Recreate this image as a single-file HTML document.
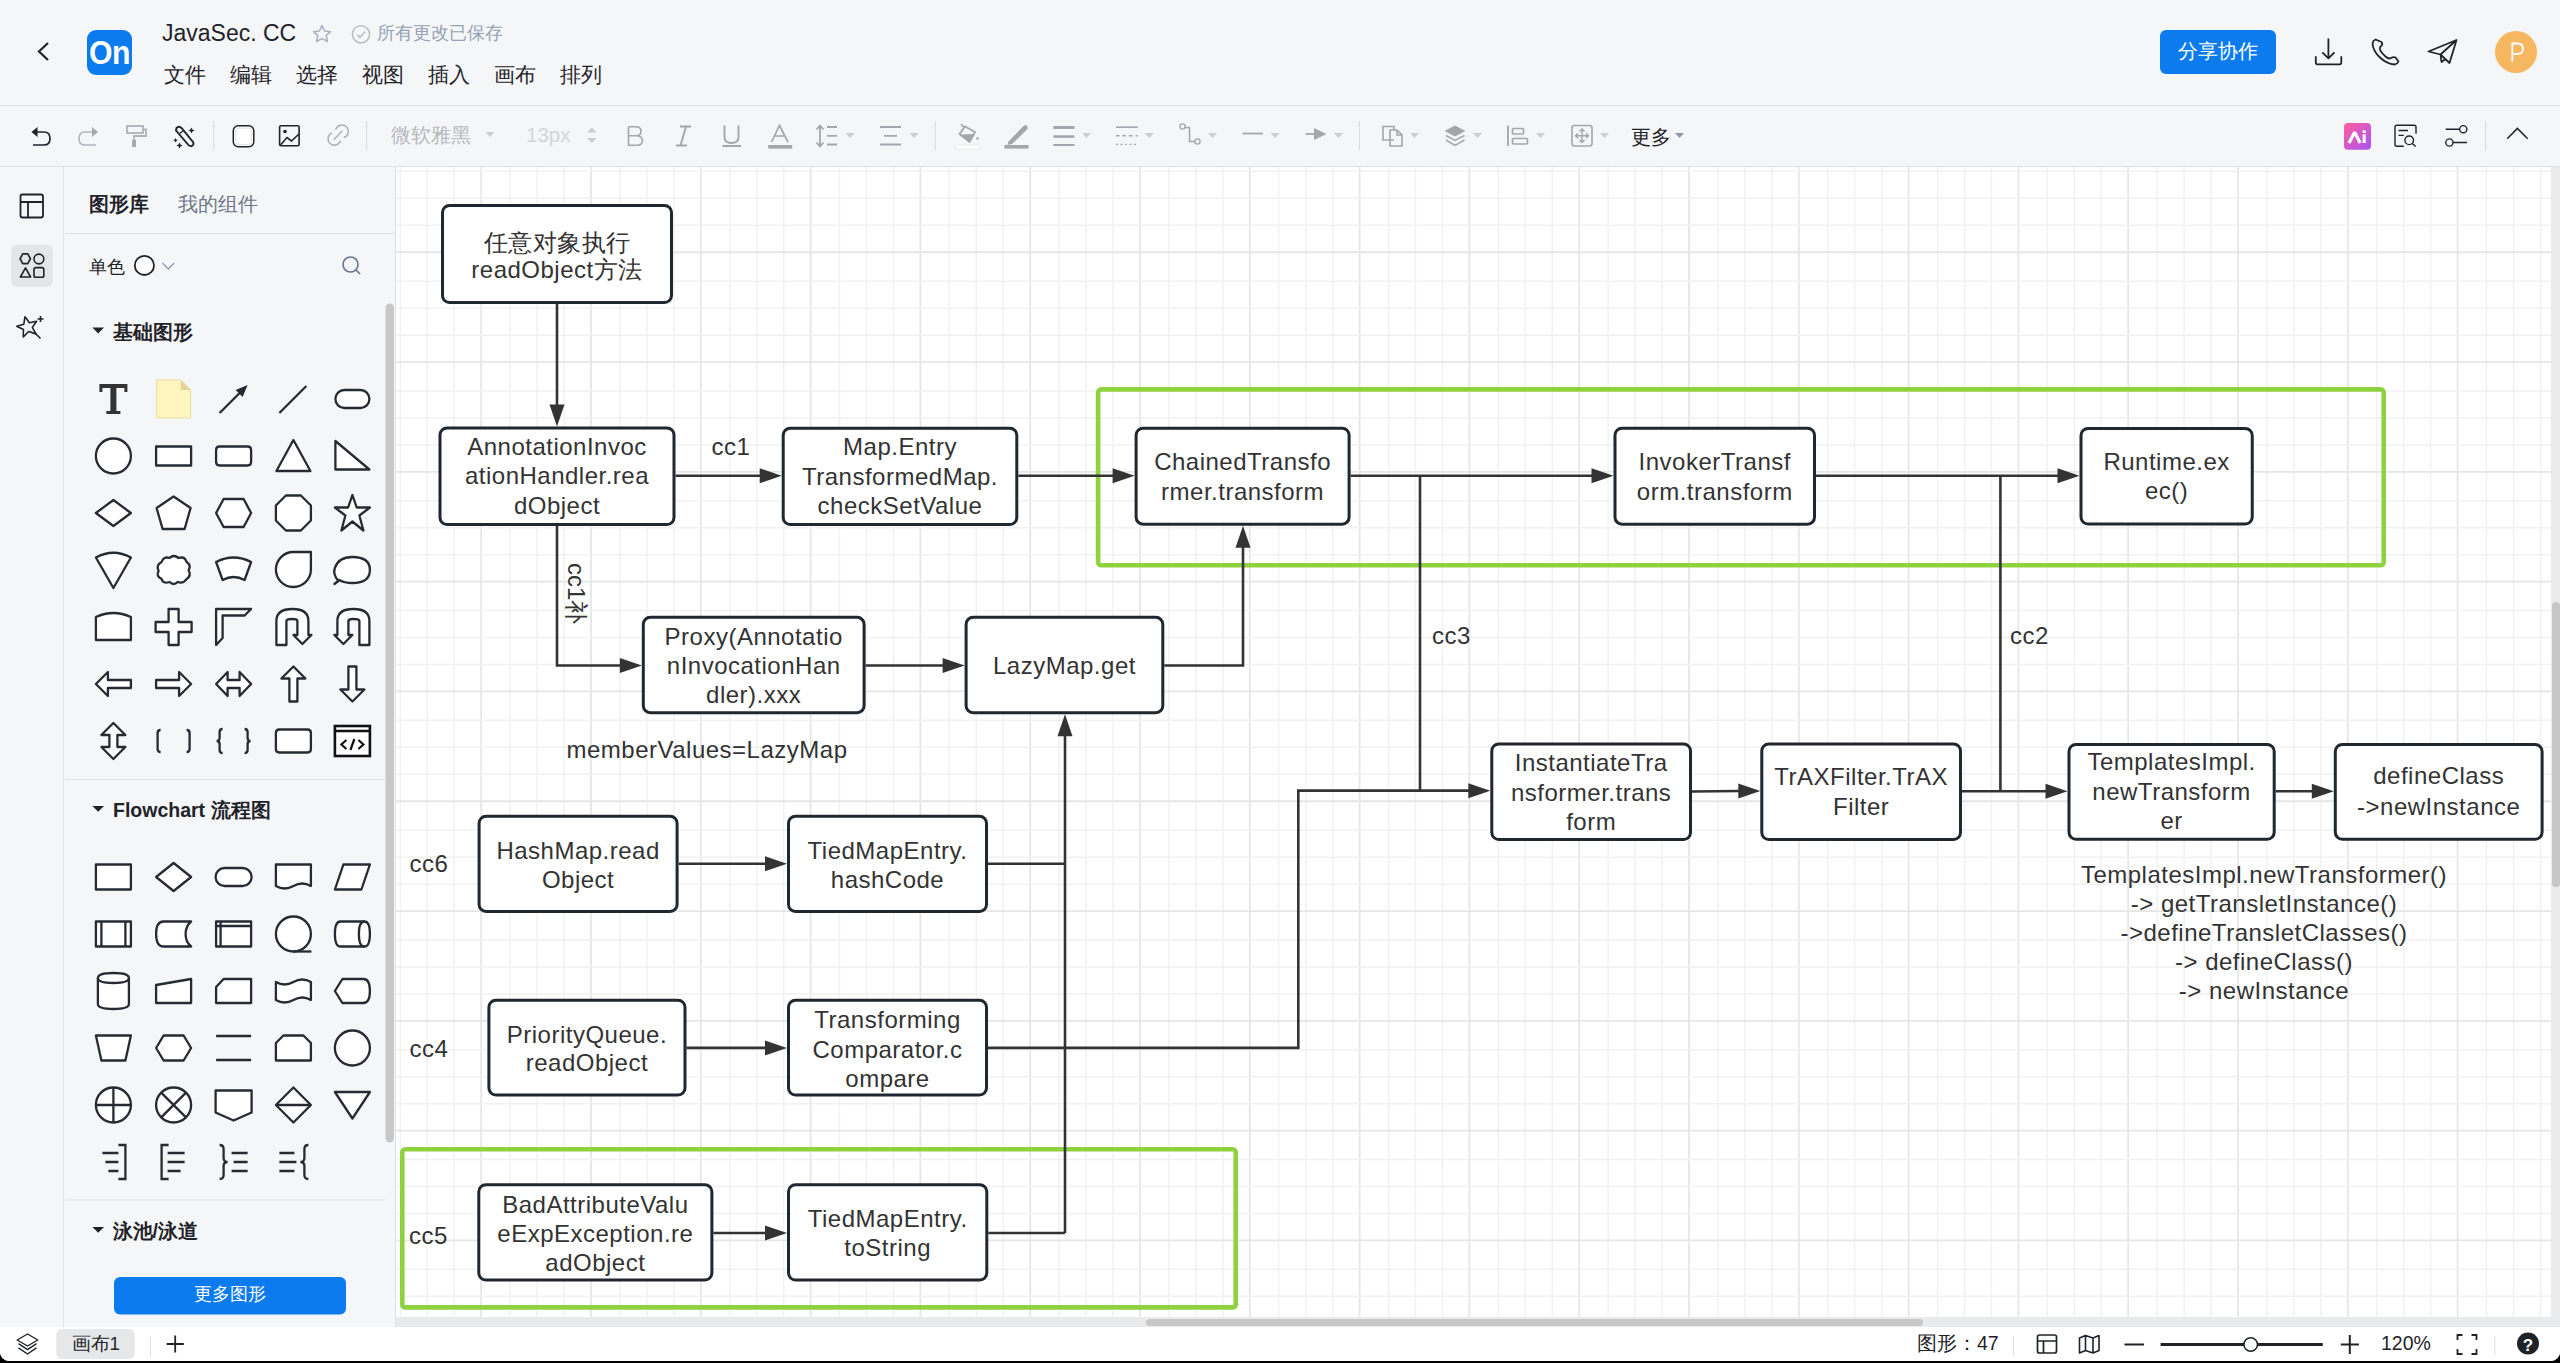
<!DOCTYPE html>
<html><head><meta charset="utf-8"><style>
html,body{margin:0;padding:0;width:2560px;height:1363px;overflow:hidden;background:#000}
.abs{position:absolute}
.t{font-family:"Liberation Sans",sans-serif;white-space:nowrap;line-height:1.2}
#app{position:absolute;left:0;top:0;width:2560px;height:1361px;background:#f5f6f8;border-radius:0 0 9px 9px;overflow:hidden}
.dt{font-family:"Liberation Sans",sans-serif;font-size:24px;fill:#333;text-anchor:middle;letter-spacing:0.5px}
.dl{font-family:"Liberation Sans",sans-serif;font-size:24px;fill:#333}
</style></head><body><div id="app">
<div class="abs" style="left:0;top:105px;width:2560px;height:1px;background:#dfe1e5"></div>
<div class="abs" style="left:0;top:166px;width:2560px;height:1px;background:#dfe1e5"></div>
<svg class="abs" style="left:0;top:0" width="700" height="105"><path d="M48,43 L39,51.5 L48,60" fill="none" stroke="#1f2329" stroke-width="2.2"/><rect x="87" y="30" width="45" height="45" rx="9" fill="#0b7bef"/><text transform="translate(109.5,64) scale(0.93,1)" text-anchor="middle" font-family="Liberation Sans" font-weight="bold" font-size="32.5" letter-spacing="-0.5" fill="#fff">On</text><path d="M322,25.5 L324.6,31 L330.5,31.7 L326.2,35.7 L327.4,41.5 L322,38.6 L316.6,41.5 L317.8,35.7 L313.5,31.7 L319.4,31 Z" fill="none" stroke="#aab3c3" stroke-width="1.6" stroke-linejoin="round"/><circle cx="361" cy="34.3" r="8.6" fill="none" stroke="#bcbcbc" stroke-width="1.5"/><path d="M357.2,34.6 L360,37.3 L365,31.8" fill="none" stroke="#bcbcbc" stroke-width="1.5"/></svg>
<div class="abs t" style="left:162px;top:20px;font-size:23px;color:#1f2329">JavaSec. CC</div>
<div class="abs t" style="left:377px;top:23px;font-size:18px;color:#95a1b5">所有更改已保存</div>
<div class="abs t" style="left:164px;top:63px;font-size:20.5px;color:#1f2329">文件</div>
<div class="abs t" style="left:230px;top:63px;font-size:20.5px;color:#1f2329">编辑</div>
<div class="abs t" style="left:296px;top:63px;font-size:20.5px;color:#1f2329">选择</div>
<div class="abs t" style="left:362px;top:63px;font-size:20.5px;color:#1f2329">视图</div>
<div class="abs t" style="left:428px;top:63px;font-size:20.5px;color:#1f2329">插入</div>
<div class="abs t" style="left:494px;top:63px;font-size:20.5px;color:#1f2329">画布</div>
<div class="abs t" style="left:560px;top:63px;font-size:20.5px;color:#1f2329">排列</div>
<div class="abs" style="left:2160px;top:30px;width:116px;height:44px;border-radius:6px;background:#0b7bef"></div>
<div class="abs t" style="left:2160px;top:39px;width:116px;text-align:center;font-size:20px;color:#fff">分享协作</div>
<svg class="abs" style="left:2300px;top:20px" width="260" height="70"><path d="M28.4,18.5 V38.5 M22.3,32.3 L28.4,38.4 L34.5,32.3 M15.8,36.3 V42.5 Q15.8,44.3 17.6,44.3 H39.5 Q41.3,44.3 41.3,42.5 V36.3" fill="none" stroke="#1f2329" stroke-width="1.8" stroke-linejoin="round"/><path d="M75.5,19.5 Q73,20.5 72.5,23.5 Q73,31 80,37.5 Q87,44 94.5,44.5 Q97.5,44 98.5,41.5 L95.5,37.5 Q93.5,36.5 91,38 Q89,39.5 85.5,36.5 Q81,32.5 80,29.5 Q79.5,27 81.5,25.5 Q83,24 81.5,22 Z" fill="none" stroke="#1f2329" stroke-width="1.8" stroke-linejoin="round"/><path d="M128.5,31.5 L156.5,20 L149.5,43 L140.5,34.5 Z M140.5,34.5 L156.5,20 M140.5,34.5 L141.5,42 L145.5,39" fill="none" stroke="#1f2329" stroke-width="1.8" stroke-linejoin="round"/><circle cx="216" cy="32" r="21" fill="#f5b860"/><path d="M212.3,41.7 V23.5 H217.5 Q223,23.5 223,28.7 Q223,33.8 217.5,33.8 H212.3" fill="none" stroke="#fff" stroke-width="1.8"/></svg>
<svg class="abs" style="left:0;top:0" width="2560" height="166"><path d="M35,132 H44 Q50,132 50,138.5 Q50,145 44,145 H33" fill="none" stroke="#1f2329" stroke-width="1.7"/><polygon points="31.5,132 37.5,127 37.5,137" fill="#1f2329"/>
<path d="M94,132 H85 Q79,132 79,138.5 Q79,145 85,145 H96" fill="none" stroke="#b4b7bc" stroke-width="1.7"/><polygon points="98,132 92,127 92,137" fill="#a6a9ae"/>
<rect x="127" y="126" width="16" height="7" fill="none" stroke="#b0b3b8" stroke-width="1.8"/><path d="M143,129.5 H146 V136 H134 V140" fill="none" stroke="#b0b3b8" stroke-width="1.8"/><rect x="132" y="140" width="4" height="7" fill="#a6a9ae"/>
<path d="M176.5,128 Q179,125.5 181.5,128 L193,142 Q194.5,145 191.5,146 Q189.5,146.5 188,144.5 L176,130.5 Z" fill="none" stroke="#1f2329" stroke-width="1.9"/><path d="M179.5,133.5 L183,131" stroke="#1f2329" stroke-width="1.5"/><path d="M191.5,127.5 l1,2 2,1 -2,1 -1,2 -1,-2 -2,-1 2,-1 z M175.5,138 l0.8,1.5 1.5,0.8 -1.5,0.8 -0.8,1.5 -0.8,-1.5 -1.5,-0.8 1.5,-0.8 z M179.5,142.5 l1,2 2,1 -2,1 -1,2 -1,-2 -2,-1 2,-1 z" fill="#1f2329"/>
<line x1="213.7" y1="121" x2="213.7" y2="150.5" stroke="#d8dadd" stroke-width="1"/>
<rect x="233.3" y="125.8" width="20.5" height="21" rx="5" fill="#fff" stroke="#1f2329" stroke-width="1.5"/><rect x="235.6" y="128.1" width="15.9" height="16.4" rx="3" fill="#fff" stroke="#dedfe2" stroke-width="1"/>
<rect x="279.6" y="125.8" width="19.5" height="20" rx="1.5" fill="none" stroke="#1f2329" stroke-width="1.6"/><circle cx="285" cy="131.5" r="1.8" fill="#1f2329"/><path d="M280.5,145 L287,137.5 L291.5,141 L299,134" fill="none" stroke="#1f2329" stroke-width="1.6"/>
<path d="M331.5,133.1 A6.4,6.4 0 1 0 340.4,141.2 M335.9,129.1 A6.4,6.4 0 1 1 344.4,137.3 M334.3,139.3 L341.8,131.3" fill="none" stroke="#acb0b6" stroke-width="1.5" stroke-linecap="round"/>
<line x1="366.7" y1="121" x2="366.7" y2="150.5" stroke="#d8dadd" stroke-width="1"/>
<polygon points="485.5,132 494.5,132 490.0,137" fill="#c9ced6"/>
<polygon points="587,132.5 596.5,132.5 591.75,127.5" fill="#c9ced6"/><polygon points="587,138 596.5,138 591.75,143" fill="#c9ced6"/>
<path d="M628.5,126.8 H636 Q641,126.8 641,131.5 Q641,135.8 636,135.8 H628.5 M636,135.8 Q642.5,135.8 642.5,140.5 Q642.5,145.3 636.5,145.3 H628.5 V126.8" fill="none" stroke="#a3a6ab" stroke-width="1.6"/>
<path d="M680,126.5 H691 M676,145.5 H687 M686,126.5 L680.5,145.5" fill="none" stroke="#a3a6ab" stroke-width="1.9"/>
<path d="M724.5,125.5 V137 Q724.5,143 731.5,143 Q738.5,143 738.5,137 V125.5 M722.5,146 H741" fill="none" stroke="#a3a6ab" stroke-width="1.9"/>
<path d="M771.5,142 L779.5,125.5 L788,142 M774.5,136 H785" fill="none" stroke="#a3a6ab" stroke-width="1.7"/><rect x="768.2" y="145" width="24" height="3.6" fill="#a3a6ab"/>
<path d="M820,126 V146 M816.5,129.5 L820,125.5 L823.5,129.5 M816.5,142.5 L820,146.5 L823.5,142.5 M827,127 H837 M827,135.8 H837 M827,144.5 H837" fill="none" stroke="#a3a6ab" stroke-width="1.8"/>
<polygon points="845.6,133 854.6,133 850.1,138" fill="#c9ced6"/>
<path d="M880,127 H901 M884,135.8 H897 M880,144.5 H901" fill="none" stroke="#a3a6ab" stroke-width="1.8"/>
<polygon points="909.6,133 918.6,133 914.1,138" fill="#c9ced6"/>
<line x1="935.3" y1="121" x2="935.3" y2="150.5" stroke="#d8dadd" stroke-width="1"/>
<path d="M961,124 L963.5,127 M959.5,134 L965,126.5 L975,132 L969.5,142 Z" fill="none" stroke="#a3a6ab" stroke-width="1.8"/><path d="M960,134.5 L975,134 L969.5,142 Z" fill="#a3a6ab"/><circle cx="977.5" cy="138.5" r="1.3" fill="#a3a6ab"/><rect x="955.5" y="145" width="25" height="4" fill="#fff" stroke="#e8e9eb" stroke-width="0.8"/>
<path d="M1008.5,141.5 L1023.5,126 Q1025.5,124.5 1027,126 Q1028.5,127.5 1027,129.5 L1012,144 L1007.5,145 Z" fill="#a3a6ab"/><rect x="1004.5" y="145" width="24" height="3.6" fill="#a3a6ab"/>
<rect x="1053.4" y="126" width="21" height="3" fill="#a3a6ab"/><rect x="1053.4" y="135.3" width="21" height="2.5" fill="#a3a6ab"/><rect x="1053.4" y="144" width="21" height="2" fill="#a3a6ab"/>
<polygon points="1082,133 1091,133 1086.5,138" fill="#c9ced6"/>
<path d="M1116,127.2 H1137.7" stroke="#a3a6ab" stroke-width="1.6"/><path d="M1116,135.7 H1137.7" stroke="#a3a6ab" stroke-width="1.6" stroke-dasharray="3.5,3"/><path d="M1116,144.4 H1137.7" stroke="#a3a6ab" stroke-width="1.4" stroke-dasharray="2,2.5"/>
<polygon points="1144.8,133 1153.8,133 1149.3,138" fill="#c9ced6"/>
<circle cx="1182.5" cy="126.5" r="2.6" fill="none" stroke="#a3a6ab" stroke-width="1.4"/><circle cx="1197.5" cy="141.5" r="2.6" fill="none" stroke="#a3a6ab" stroke-width="1.4"/><path d="M1185,127.5 H1189.5 V141.5 H1195" fill="none" stroke="#a3a6ab" stroke-width="1.5"/>
<polygon points="1208,133 1217,133 1212.5,138" fill="#c9ced6"/>
<path d="M1242.5,133.5 H1263" stroke="#a3a6ab" stroke-width="1.8"/>
<polygon points="1270.6,133 1279.6,133 1275.1,138" fill="#c9ced6"/>
<path d="M1305.8,134 H1316" stroke="#a3a6ab" stroke-width="1.8"/><polygon points="1314,128 1326.5,134 1314,140" fill="#a3a6ab"/>
<polygon points="1334,133 1343,133 1338.5,138" fill="#c9ced6"/>
<line x1="1359.5" y1="121" x2="1359.5" y2="150.5" stroke="#d8dadd" stroke-width="1"/>
<path d="M1394,140 H1383 V126.5 H1394 V130" fill="none" stroke="#a3a6ab" stroke-width="1.6"/><path d="M1390,130 H1397 L1402,135 V146 H1390 Z M1397,130 V135 H1402" fill="none" stroke="#a3a6ab" stroke-width="1.6"/>
<polygon points="1410,133 1419,133 1414.5,138" fill="#c9ced6"/>
<polygon points="1455,125.5 1465.5,131 1455,136.5 1444.5,131" fill="#a3a6ab"/><path d="M1446,135.5 L1455,140.5 L1464.5,135.5 M1446,140 L1455,145.5 L1464.5,140" fill="none" stroke="#a3a6ab" stroke-width="1.5"/>
<polygon points="1473,133 1482,133 1477.5,138" fill="#c9ced6"/>
<path d="M1508,125.5 V146" stroke="#a3a6ab" stroke-width="1.8"/><rect x="1512.5" y="128.5" width="11" height="5.5" rx="1" fill="none" stroke="#a3a6ab" stroke-width="1.6"/><rect x="1512.5" y="138.5" width="15" height="5.5" rx="1" fill="none" stroke="#a3a6ab" stroke-width="1.6"/>
<polygon points="1536,133 1545,133 1540.5,138" fill="#c9ced6"/>
<rect x="1572" y="125.5" width="20" height="20.5" rx="2.5" fill="none" stroke="#a3a6ab" stroke-width="1.6"/><path d="M1582,129 V142.5 M1575.5,135.8 H1588.5 M1579.5,131.5 L1582,129 L1584.5,131.5 M1579.5,140 L1582,142.5 L1584.5,140 M1578,133.3 L1575.5,135.8 L1578,138.3 M1586,133.3 L1588.5,135.8 L1586,138.3" fill="none" stroke="#a3a6ab" stroke-width="1.4"/>
<polygon points="1600,133 1609,133 1604.5,138" fill="#c9ced6"/>
<polygon points="1675,133 1684,133 1679.5,138" fill="#8f97a8"/>
<defs><linearGradient id="aig" x1="0" y1="0" x2="1" y2="1"><stop offset="0" stop-color="#ff5e9a"/><stop offset="1" stop-color="#a855f7"/></linearGradient></defs>
<rect x="2344" y="123" width="27" height="26.7" rx="4" fill="url(#aig)"/><path d="M2349,143 L2354.6,132.3 L2360.2,143" fill="none" stroke="#fff" stroke-width="3.2" stroke-linejoin="bevel"/><rect x="2362.6" y="134.3" width="3.1" height="8.7" fill="#fff"/><rect x="2362.6" y="130.4" width="3.1" height="2.6" fill="#fff"/>
<path d="M2403.8,146.3 H2396.8 Q2395,146.3 2395,144.5 V127 Q2395,125.2 2396.8,125.2 H2414.2 Q2416,125.2 2416,127 V133.7" fill="none" stroke="#1f2329" stroke-width="1.4"/><path d="M2398.5,130.5 H2408 M2398.5,135.4 H2403.8" stroke="#1f2329" stroke-width="1.4"/><circle cx="2409.2" cy="140.3" r="4.3" fill="none" stroke="#1f2329" stroke-width="1.4"/><path d="M2412.3,143.4 L2415.7,146.6" stroke="#1f2329" stroke-width="1.4"/>
<path d="M2445.7,129.2 H2459.6 M2453.1,142.5 H2467" stroke="#1f2329" stroke-width="1.4"/><circle cx="2463.3" cy="129.2" r="3.6" fill="none" stroke="#1f2329" stroke-width="1.4"/><circle cx="2449.4" cy="142.5" r="3.6" fill="none" stroke="#1f2329" stroke-width="1.4"/>
<line x1="2485.5" y1="121" x2="2485.5" y2="151" stroke="#d8dadd" stroke-width="1"/>
<path d="M2507.2,138.7 L2517.4,128.4 L2527.7,138.7" fill="none" stroke="#1f2329" stroke-width="1.5"/></svg>
<div class="abs t" style="left:391px;top:124px;font-size:19.5px;color:#b5b9c0">微软雅黑</div>
<div class="abs t" style="left:526px;top:122.5px;font-size:20.5px;color:#d2d5da">13px</div>
<div class="abs t" style="left:1631px;top:126px;font-size:19.5px;color:#1f2329">更多</div>
<svg class="abs" style="left:0;top:0" width="400" height="1327"><rect x="20.5" y="194.5" width="22.5" height="23" rx="2" fill="none" stroke="#1f2329" stroke-width="1.8"/><path d="M20.5,202 H43 M28,202 V217.5" stroke="#1f2329" stroke-width="1.8"/>
<rect x="11.2" y="244.8" width="41.7" height="42" rx="6" fill="#e4e5e8"/>
<polygon points="20.1,258.75 22.7,253.9 27.8,253.9 30.4,258.75 27.8,263.6 22.7,263.6" fill="none" stroke="#1f2329" stroke-width="1.6" stroke-linejoin="round"/><circle cx="38.9" cy="259" r="4.9" fill="none" stroke="#1f2329" stroke-width="1.6"/><polygon points="25.5,267.8 30.6,277 20.4,277" fill="none" stroke="#1f2329" stroke-width="1.6" stroke-linejoin="round"/><rect x="34" y="267.6" width="9.8" height="9.6" rx="1.8" fill="none" stroke="#1f2329" stroke-width="1.6"/>
<g transform="translate(27.5,327) rotate(-14)"><path d="M0,-10.5 L2.9,-3.6 L10.2,-3.3 L4.6,1.5 L6.5,8.7 L0,4.6 L-6.5,8.7 L-4.6,1.5 L-10.2,-3.3 L-2.9,-3.6 Z" fill="none" stroke="#1f2329" stroke-width="1.6" stroke-linejoin="round"/></g><path d="M40.5,316 V322 M37.5,319 H43.5 M35.5,333.5 L40.5,338.5" stroke="#1f2329" stroke-width="1.6"/>
<line x1="63.5" y1="166" x2="63.5" y2="1327" stroke="#dfe1e5" stroke-width="1"/>
<line x1="65" y1="233.6" x2="395" y2="233.6" stroke="#dfe1e5" stroke-width="1"/>
<line x1="395.5" y1="166" x2="395.5" y2="1327" stroke="#dfe1e5" stroke-width="1"/>
<line x1="65" y1="779.5" x2="385" y2="779.5" stroke="#dfe1e5" stroke-width="1"/>
<line x1="65" y1="1200" x2="385" y2="1200" stroke="#dfe1e5" stroke-width="1"/>
<circle cx="144.4" cy="265.4" r="9.6" fill="#fff" stroke="#1f2329" stroke-width="1.8"/><path d="M162.5,263 L168.3,269 L174.2,263" fill="none" stroke="#8f9bb3" stroke-width="1.3"/>
<circle cx="350.5" cy="264.5" r="7.5" fill="none" stroke="#6b7a90" stroke-width="1.7"/><path d="M356,270 L360,274" stroke="#6b7a90" stroke-width="1.7"/>
<rect x="385.5" y="303.5" width="8.5" height="839" rx="4.2" fill="#c8c8c8"/>
<polygon points="92.4,327.6 104,327.6 98.2,333.40000000000003" fill="#1f2329"/>
<polygon points="92.4,806 104,806 98.2,811.8" fill="#1f2329"/>
<polygon points="92.4,1227 104,1227 98.2,1232.8" fill="#1f2329"/>
<rect x="114" y="1277" width="232" height="37.6" rx="6" fill="#0b7bef"/></svg>
<svg width="396" height="1327" style="position:absolute;left:0;top:0"><g transform="translate(113.4,399)"><path d="M-14,-15 H14 V-7 H11 V-11 H3 V12 H7 V15 H-7 V12 H-3 V-11 H-11 V-7 H-14 Z" fill="#333" /></g>
<g transform="translate(173.6,399)"><path d="M-17,-19 H7 L17,-9 V19 H-17 Z" fill="#fff5bf" stroke="#ecdca0" stroke-width="1"/><path d="M7,-19 V-9 H17 Z" fill="#e6d59a"/></g>
<g transform="translate(233.6,399)"><line x1="-14" y1="14" x2="8" y2="-8" stroke="#262b33" stroke-width="2.3"/><polygon points="14,-14 2,-9 9,-2" fill="#262b33"/></g>
<g transform="translate(293.4,399)"><line x1="-14" y1="14" x2="13" y2="-13" stroke="#262b33" stroke-width="2.3"/></g>
<g transform="translate(352.4,399)"><path d="M-8,-9 H8 A9,9 0 0 1 8,9 H-8 A9,9 0 0 1 -8,-9 Z" fill="#fff" stroke="#262b33" stroke-width="2.3" stroke-linejoin="round" /></g>
<g transform="translate(113.4,456)"><circle r="17.5" fill="#fff" stroke="#262b33" stroke-width="2.3"/></g>
<g transform="translate(173.6,456)"><path d="M-17.5,-9.5 H17.5 V9.5 H-17.5 Z" fill="#fff" stroke="#262b33" stroke-width="2.3" stroke-linejoin="round" /></g>
<g transform="translate(233.6,456)"><path d="M-14,-9.5 H14 Q17.5,-9.5 17.5,-6 V6 Q17.5,9.5 14,9.5 H-14 Q-17.5,9.5 -17.5,6 V-6 Q-17.5,-9.5 -14,-9.5 Z" fill="#fff" stroke="#262b33" stroke-width="2.3" stroke-linejoin="round" /></g>
<g transform="translate(293.4,456)"><path d="M0,-16 L17,15 H-17 Z" fill="#fff" stroke="#262b33" stroke-width="2.3" stroke-linejoin="round" /></g>
<g transform="translate(352.4,456)"><path d="M-17,-15 L17,13.5 H-17 Z" fill="#fff" stroke="#262b33" stroke-width="2.3" stroke-linejoin="round" /></g>
<g transform="translate(113.4,513)"><path d="M0,-13 L17.5,0 L0,13 L-17.5,0 Z" fill="#fff" stroke="#262b33" stroke-width="2.3" stroke-linejoin="round" /></g>
<g transform="translate(173.6,513)"><path d="M0,-16.5 L17,-5 L11,16 H-11 L-17,-5 Z" fill="#fff" stroke="#262b33" stroke-width="2.3" stroke-linejoin="round" /></g>
<g transform="translate(233.6,513)"><path d="M-10,-14 H10 L17.5,0 L10,14 H-10 L-17.5,0 Z" fill="#fff" stroke="#262b33" stroke-width="2.3" stroke-linejoin="round" /></g>
<g transform="translate(293.4,513)"><path d="M-7.5,-17.5 H7.5 L17.5,-7.5 V7.5 L7.5,17.5 H-7.5 L-17.5,7.5 V-7.5 Z" fill="#fff" stroke="#262b33" stroke-width="2.3" stroke-linejoin="round" /></g>
<g transform="translate(352.4,513)"><path d="M0,-18 L4.3,-5.5 L17.5,-5.5 L7,2.5 L11,17.5 L0,8.5 L-11,17.5 L-7,2.5 L-17.5,-5.5 L-4.3,-5.5 Z" fill="#fff" stroke="#262b33" stroke-width="2.3" stroke-linejoin="round" /></g>
<g transform="translate(113.4,570)"><path d="M-17.5,-12.5 Q0,-22 17.5,-12.5 L0,18 Z" fill="#fff" stroke="#262b33" stroke-width="2.3" stroke-linejoin="round" /></g>
<g transform="translate(173.6,570)"><path d="M-12,-8 Q-10,-14 -4,-12 Q0,-16 5,-12 Q11,-14 13,-8 Q18,-5 15,0 Q18,6 13,9 Q10,14 4,12 Q0,16 -4,12 Q-11,14 -12,9 Q-18,6 -15,1 Q-18,-5 -12,-8 Z" fill="#fff" stroke="#262b33" stroke-width="2.3" stroke-linejoin="round" /></g>
<g transform="translate(233.6,570)"><path d="M-17.5,-8 Q0,-17 17.5,-8 L11,10 Q0,4 -11,10 Z" fill="#fff" stroke="#262b33" stroke-width="2.3" stroke-linejoin="round" /></g>
<g transform="translate(293.4,570)"><path d="M0,-18 H17.5 V0 A17.5,17.5 0 1 1 0,-18 Z" fill="#fff" stroke="#262b33" stroke-width="2.3" stroke-linejoin="round" /></g>
<g transform="translate(352.4,570)"><path d="M-14,11 Q-20,4 -17.5,-2 Q-14,-13 0,-13 Q17.5,-13 17.5,0 Q17.5,13 0,13 Q-8,13 -13,10 L-18,14 Z" fill="#fff" stroke="#262b33" stroke-width="2.3" stroke-linejoin="round" /></g>
<g transform="translate(113.4,627)"><path d="M-17.5,-10 Q0,-18 17.5,-10 V13 H-17.5 Z" fill="#fff" stroke="#262b33" stroke-width="2.3" stroke-linejoin="round" /></g>
<g transform="translate(173.6,627)"><path d="M-5,-18 H5 V-5 H18 V5 H5 V18 H-5 V5 H-18 V-5 H-5 Z" fill="#fff" stroke="#262b33" stroke-width="2.3" stroke-linejoin="round" /></g>
<g transform="translate(233.6,627)"><path d="M-17.5,-18 H17.5 L11,-11.5 H-11 V11 L-17.5,18 Z" fill="#fff" stroke="#262b33" stroke-width="2.3" stroke-linejoin="round" /></g>
<g transform="translate(293.4,627)"><path d="M-17,18 V-6 Q-17,-18 -1,-18 Q15,-18 15,-6 V8 H18 L9,17 L0,8 H4 V-6 Q4,-8 -1,-8 Q-7,-8 -7,-6 V18 Z" fill="#fff" stroke="#262b33" stroke-width="2.3" stroke-linejoin="round" /></g>
<g transform="translate(352.4,627)"><path d="M17,18 V-6 Q17,-18 1,-18 Q-15,-18 -15,-6 V8 H-18 L-9,17 L0,8 H-4 V-6 Q-4,-8 1,-8 Q7,-8 7,-6 V18 Z" fill="#fff" stroke="#262b33" stroke-width="2.3" stroke-linejoin="round" /></g>
<g transform="translate(113.4,684)"><path d="M-17.5,0 L-5.5,-12 V-4 H17.5 V4 H-5.5 V12 Z" fill="#fff" stroke="#262b33" stroke-width="2.3" stroke-linejoin="round" /></g>
<g transform="translate(173.6,684)"><path d="M17.5,0 L5.5,-12 V-4 H-17.5 V4 H5.5 V12 Z" fill="#fff" stroke="#262b33" stroke-width="2.3" stroke-linejoin="round" /></g>
<g transform="translate(233.6,684)"><path d="M-17.5,0 L-6,-12 V-4 H6 V-12 L17.5,0 L6,12 V4 H-6 V12 Z" fill="#fff" stroke="#262b33" stroke-width="2.3" stroke-linejoin="round" /></g>
<g transform="translate(293.4,684)"><path d="M0,-17.5 L12,-5.5 H4 V17.5 H-4 V-5.5 H-12 Z" fill="#fff" stroke="#262b33" stroke-width="2.3" stroke-linejoin="round" /></g>
<g transform="translate(352.4,684)"><path d="M0,17.5 L12,5.5 H4 V-17.5 H-4 V5.5 H-12 Z" fill="#fff" stroke="#262b33" stroke-width="2.3" stroke-linejoin="round" /></g>
<g transform="translate(113.4,741)"><path d="M0,-18 L12,-6 H4 V6 H12 L0,18 L-12,6 H-4 V-6 H-12 Z" fill="#fff" stroke="#262b33" stroke-width="2.3" stroke-linejoin="round" /></g>
<g transform="translate(173.6,741)"><path d="M-13,-11 Q-16,-11 -16,-8 V8 Q-16,11 -13,11 M13,-11 Q16,-11 16,-8 V8 Q16,11 13,11" fill="none" stroke="#262b33" stroke-width="2.3"/></g>
<g transform="translate(233.6,741)"><path d="M-11,-12 Q-14,-12 -14,-9 V-3 Q-14,0 -17,0 Q-14,0 -14,3 V9 Q-14,12 -11,12 M11,-12 Q14,-12 14,-9 V-3 Q14,0 17,0 Q14,0 14,3 V9 Q14,12 11,12" fill="none" stroke="#262b33" stroke-width="2.3"/></g>
<g transform="translate(293.4,741)"><path d="M-14,-11.5 H14 Q17.5,-11.5 17.5,-8 V8 Q17.5,11.5 14,11.5 H-14 Q-17.5,11.5 -17.5,8 V-8 Q-17.5,-11.5 -14,-11.5 Z" fill="#fff" stroke="#262b33" stroke-width="2.3" stroke-linejoin="round" /></g>
<g transform="translate(352.4,741)"><rect x="-17.5" y="-15" width="35" height="30" fill="#fff" stroke="#111" stroke-width="2.6"/><line x1="-17.5" y1="-10" x2="17.5" y2="-10" stroke="#111" stroke-width="2.4"/><path d="M-6,-1 L-11,3.5 L-6,8 M6,-1 L11,3.5 L6,8 M2,-2 L-2,9" fill="none" stroke="#111" stroke-width="2.2"/></g>
<g transform="translate(113.4,877)"><path d="M-17.5,-12.5 H17.5 V12.5 H-17.5 Z" fill="#fff" stroke="#262b33" stroke-width="2.3" stroke-linejoin="round" /></g>
<g transform="translate(173.6,877)"><path d="M0,-14 L17.5,0 L0,14 L-17.5,0 Z" fill="#fff" stroke="#262b33" stroke-width="2.3" stroke-linejoin="round" /></g>
<g transform="translate(233.6,877)"><path d="M-9,-9 H9 A9,9 0 0 1 9,9 H-9 A9,9 0 0 1 -9,-9 Z" fill="#fff" stroke="#262b33" stroke-width="2.3" stroke-linejoin="round" /></g>
<g transform="translate(293.4,877)"><path d="M-17.5,-12.5 H17.5 V9 Q9,4 0,9 Q-9,14 -17.5,9 Z" fill="#fff" stroke="#262b33" stroke-width="2.3" stroke-linejoin="round" /></g>
<g transform="translate(352.4,877)"><path d="M-9,-12.5 H17.5 L9,12.5 H-17.5 Z" fill="#fff" stroke="#262b33" stroke-width="2.3" stroke-linejoin="round" /></g>
<g transform="translate(113.4,934)"><path d="M-17.5,-12.5 H17.5 V12.5 H-17.5 Z" fill="#fff" stroke="#262b33" stroke-width="2.3" stroke-linejoin="round" /><path d="M-12,-12.5 V12.5 M12,-12.5 V12.5" stroke="#262b33" stroke-width="2.3"/></g>
<g transform="translate(173.6,934)"><path d="M-10,-12.5 H17.5 Q12,-8 12,0 Q12,8 17.5,12.5 H-10 Q-17.5,12.5 -17.5,0 Q-17.5,-12.5 -10,-12.5 Z" fill="#fff" stroke="#262b33" stroke-width="2.3" stroke-linejoin="round" /></g>
<g transform="translate(233.6,934)"><path d="M-17.5,-12.5 H17.5 V12.5 H-17.5 Z" fill="#fff" stroke="#262b33" stroke-width="2.3" stroke-linejoin="round" /><path d="M-17.5,-8 H17.5 M-13,-12.5 V12.5" stroke="#262b33" stroke-width="2.3"/></g>
<g transform="translate(293.4,934)"><circle r="17.5" fill="#fff" stroke="#262b33" stroke-width="2.3"/><path d="M0,17.5 H18" stroke="#262b33" stroke-width="2.3"/></g>
<g transform="translate(352.4,934)"><path d="M-12,-12.5 H12 Q17.5,-12.5 17.5,0 Q17.5,12.5 12,12.5 H-12 Q-17.5,12.5 -17.5,0 Q-17.5,-12.5 -12,-12.5 Z" fill="#fff" stroke="#262b33" stroke-width="2.3" stroke-linejoin="round" /><path d="M12,-12.5 Q6.5,-12.5 6.5,0 Q6.5,12.5 12,12.5" fill="none" stroke="#262b33" stroke-width="2.3"/></g>
<g transform="translate(113.4,991)"><path d="M-15.5,-13 Q-15.5,-18 0,-18 Q15.5,-18 15.5,-13 V13 Q15.5,18 0,18 Q-15.5,18 -15.5,13 Z" fill="#fff" stroke="#262b33" stroke-width="2.3" stroke-linejoin="round" /><path d="M-15.5,-13 Q-15.5,-8 0,-8 Q15.5,-8 15.5,-13" fill="none" stroke="#262b33" stroke-width="2.3"/></g>
<g transform="translate(173.6,991)"><path d="M-17.5,-6 L17.5,-12 V12 H-17.5 Z" fill="#fff" stroke="#262b33" stroke-width="2.3" stroke-linejoin="round" /></g>
<g transform="translate(233.6,991)"><path d="M-10,-12 H17.5 V12 H-17.5 V-4 Z" fill="#fff" stroke="#262b33" stroke-width="2.3" stroke-linejoin="round" /></g>
<g transform="translate(293.4,991)"><path d="M-17.5,-9 Q-9,-4 0,-9 Q9,-14 17.5,-9 V9 Q9,4 0,9 Q-9,14 -17.5,9 Z" fill="#fff" stroke="#262b33" stroke-width="2.3" stroke-linejoin="round" /></g>
<g transform="translate(352.4,991)"><path d="M-10,-12 H11 Q17.5,-12 17.5,0 Q17.5,12 11,12 H-10 L-17.5,0 Z" fill="#fff" stroke="#262b33" stroke-width="2.3" stroke-linejoin="round" /></g>
<g transform="translate(113.4,1048)"><path d="M-17.5,-12.5 H17.5 L12,12.5 H-12 Z" fill="#fff" stroke="#262b33" stroke-width="2.3" stroke-linejoin="round" /></g>
<g transform="translate(173.6,1048)"><path d="M-10,-12.5 H10 L17.5,0 L10,12.5 H-10 L-17.5,0 Z" fill="#fff" stroke="#262b33" stroke-width="2.3" stroke-linejoin="round" /></g>
<g transform="translate(233.6,1048)"><path d="M-17.5,-12 H17.5 M-17.5,12 H17.5" stroke="#262b33" stroke-width="2.3"/></g>
<g transform="translate(293.4,1048)"><path d="M-10,-12.5 H10 L17.5,-5 V12.5 H-17.5 V-5 Z" fill="#fff" stroke="#262b33" stroke-width="2.3" stroke-linejoin="round" /></g>
<g transform="translate(352.4,1048)"><circle r="17.5" fill="#fff" stroke="#262b33" stroke-width="2.3"/></g>
<g transform="translate(113.4,1105)"><circle r="17.5" fill="#fff" stroke="#262b33" stroke-width="2.3"/><path d="M0,-17.5 V17.5 M-17.5,0 H17.5" stroke="#262b33" stroke-width="2.3"/></g>
<g transform="translate(173.6,1105)"><circle r="17.5" fill="#fff" stroke="#262b33" stroke-width="2.3"/><path d="M-12.4,-12.4 L12.4,12.4 M12.4,-12.4 L-12.4,12.4" stroke="#262b33" stroke-width="2.3"/></g>
<g transform="translate(233.6,1105)"><path d="M-18,-14.5 H18 V7.5 L0,15.5 L-18,7.5 Z" fill="#fff" stroke="#262b33" stroke-width="2.3" stroke-linejoin="round" /></g>
<g transform="translate(293.4,1105)"><path d="M0,-17.5 L17.5,0 L0,17.5 L-17.5,0 Z" fill="#fff" stroke="#262b33" stroke-width="2.3" stroke-linejoin="round" /><path d="M-17.5,0 H17.5" stroke="#262b33" stroke-width="2.3"/></g>
<g transform="translate(352.4,1105)"><path d="M-17.5,-13 H17.5 L0,13.5 Z" fill="#fff" stroke="#262b33" stroke-width="2.3" stroke-linejoin="round" /></g>
<g transform="translate(113.4,1162)"><path d="M5,-17 H12 V17 H5 M-11,-9 H5 M-8,0 H5 M-5,9 H5" fill="none" stroke="#262b33" stroke-width="2.3"/></g>
<g transform="translate(173.6,1162)"><path d="M-5,-17 H-12 V17 H-5 M-6,-9 H11 M-6,0 H11 M-6,9 H7" fill="none" stroke="#262b33" stroke-width="2.3"/></g>
<g transform="translate(233.6,1162)"><path d="M-14,-17 Q-10,-17 -10,-13 V-4 Q-10,0 -6,0 Q-10,0 -10,4 V13 Q-10,17 -14,17 M-2,-9 H14 M0,0 H14 M-2,9 H14" fill="none" stroke="#262b33" stroke-width="2.3"/></g>
<g transform="translate(293.4,1162)"><path d="M15,-17 Q11,-17 11,-13 V-4 Q11,0 7,0 Q11,0 11,4 V13 Q11,17 15,17 M-14,-9 H1 M-14,0 H3 M-14,9 H1" fill="none" stroke="#262b33" stroke-width="2.3"/></g></svg>
<div class="abs t" style="left:88.5px;top:192.5px;font-size:19.5px;font-weight:bold;color:#1f2329">图形库</div>
<div class="abs t" style="left:178px;top:192.5px;font-size:19.5px;color:#6e7787">我的组件</div>
<div class="abs t" style="left:88.5px;top:256.5px;font-size:18px;color:#1f2329">单色</div>
<div class="abs t" style="left:112.5px;top:320.5px;font-size:19.5px;font-weight:bold;color:#1f2329">基础图形</div>
<div class="abs t" style="left:113px;top:799px;font-size:19.5px;font-weight:bold;color:#1f2329">Flowchart 流程图</div>
<div class="abs t" style="left:112.5px;top:1220px;font-size:19.5px;font-weight:bold;color:#1f2329">泳池/泳道</div>
<div class="abs t" style="left:114px;top:1284px;width:232px;text-align:center;font-size:18px;color:#fff">更多图形</div>
<div class="abs" style="left:396px;top:167px;width:2155px;height:1150px;background:#fff;overflow:hidden">
<svg width="2155" height="1150" style="position:absolute;left:0;top:0">
<line x1="4.30" y1="0" x2="4.30" y2="1150" stroke="#f1f1f1" stroke-width="1.5"/>
<line x1="31.30" y1="0" x2="31.30" y2="1150" stroke="#f1f1f1" stroke-width="1.5"/>
<line x1="58.30" y1="0" x2="58.30" y2="1150" stroke="#f1f1f1" stroke-width="1.5"/>
<line x1="85.20" y1="0" x2="85.20" y2="1150" stroke="#e6e6e6" stroke-width="1.8"/>
<line x1="114.10" y1="0" x2="114.10" y2="1150" stroke="#f1f1f1" stroke-width="1.5"/>
<line x1="141.10" y1="0" x2="141.10" y2="1150" stroke="#f1f1f1" stroke-width="1.5"/>
<line x1="168.10" y1="0" x2="168.10" y2="1150" stroke="#f1f1f1" stroke-width="1.5"/>
<line x1="195.00" y1="0" x2="195.00" y2="1150" stroke="#e6e6e6" stroke-width="1.8"/>
<line x1="223.90" y1="0" x2="223.90" y2="1150" stroke="#f1f1f1" stroke-width="1.5"/>
<line x1="250.90" y1="0" x2="250.90" y2="1150" stroke="#f1f1f1" stroke-width="1.5"/>
<line x1="277.90" y1="0" x2="277.90" y2="1150" stroke="#f1f1f1" stroke-width="1.5"/>
<line x1="304.80" y1="0" x2="304.80" y2="1150" stroke="#e6e6e6" stroke-width="1.8"/>
<line x1="333.70" y1="0" x2="333.70" y2="1150" stroke="#f1f1f1" stroke-width="1.5"/>
<line x1="360.70" y1="0" x2="360.70" y2="1150" stroke="#f1f1f1" stroke-width="1.5"/>
<line x1="387.70" y1="0" x2="387.70" y2="1150" stroke="#f1f1f1" stroke-width="1.5"/>
<line x1="414.60" y1="0" x2="414.60" y2="1150" stroke="#e6e6e6" stroke-width="1.8"/>
<line x1="443.50" y1="0" x2="443.50" y2="1150" stroke="#f1f1f1" stroke-width="1.5"/>
<line x1="470.50" y1="0" x2="470.50" y2="1150" stroke="#f1f1f1" stroke-width="1.5"/>
<line x1="497.50" y1="0" x2="497.50" y2="1150" stroke="#f1f1f1" stroke-width="1.5"/>
<line x1="524.40" y1="0" x2="524.40" y2="1150" stroke="#e6e6e6" stroke-width="1.8"/>
<line x1="553.30" y1="0" x2="553.30" y2="1150" stroke="#f1f1f1" stroke-width="1.5"/>
<line x1="580.30" y1="0" x2="580.30" y2="1150" stroke="#f1f1f1" stroke-width="1.5"/>
<line x1="607.30" y1="0" x2="607.30" y2="1150" stroke="#f1f1f1" stroke-width="1.5"/>
<line x1="634.20" y1="0" x2="634.20" y2="1150" stroke="#e6e6e6" stroke-width="1.8"/>
<line x1="663.10" y1="0" x2="663.10" y2="1150" stroke="#f1f1f1" stroke-width="1.5"/>
<line x1="690.10" y1="0" x2="690.10" y2="1150" stroke="#f1f1f1" stroke-width="1.5"/>
<line x1="717.10" y1="0" x2="717.10" y2="1150" stroke="#f1f1f1" stroke-width="1.5"/>
<line x1="744.00" y1="0" x2="744.00" y2="1150" stroke="#e6e6e6" stroke-width="1.8"/>
<line x1="772.90" y1="0" x2="772.90" y2="1150" stroke="#f1f1f1" stroke-width="1.5"/>
<line x1="799.90" y1="0" x2="799.90" y2="1150" stroke="#f1f1f1" stroke-width="1.5"/>
<line x1="826.90" y1="0" x2="826.90" y2="1150" stroke="#f1f1f1" stroke-width="1.5"/>
<line x1="853.80" y1="0" x2="853.80" y2="1150" stroke="#e6e6e6" stroke-width="1.8"/>
<line x1="882.70" y1="0" x2="882.70" y2="1150" stroke="#f1f1f1" stroke-width="1.5"/>
<line x1="909.70" y1="0" x2="909.70" y2="1150" stroke="#f1f1f1" stroke-width="1.5"/>
<line x1="936.70" y1="0" x2="936.70" y2="1150" stroke="#f1f1f1" stroke-width="1.5"/>
<line x1="963.60" y1="0" x2="963.60" y2="1150" stroke="#e6e6e6" stroke-width="1.8"/>
<line x1="992.50" y1="0" x2="992.50" y2="1150" stroke="#f1f1f1" stroke-width="1.5"/>
<line x1="1019.50" y1="0" x2="1019.50" y2="1150" stroke="#f1f1f1" stroke-width="1.5"/>
<line x1="1046.50" y1="0" x2="1046.50" y2="1150" stroke="#f1f1f1" stroke-width="1.5"/>
<line x1="1073.40" y1="0" x2="1073.40" y2="1150" stroke="#e6e6e6" stroke-width="1.8"/>
<line x1="1102.30" y1="0" x2="1102.30" y2="1150" stroke="#f1f1f1" stroke-width="1.5"/>
<line x1="1129.30" y1="0" x2="1129.30" y2="1150" stroke="#f1f1f1" stroke-width="1.5"/>
<line x1="1156.30" y1="0" x2="1156.30" y2="1150" stroke="#f1f1f1" stroke-width="1.5"/>
<line x1="1183.20" y1="0" x2="1183.20" y2="1150" stroke="#e6e6e6" stroke-width="1.8"/>
<line x1="1212.10" y1="0" x2="1212.10" y2="1150" stroke="#f1f1f1" stroke-width="1.5"/>
<line x1="1239.10" y1="0" x2="1239.10" y2="1150" stroke="#f1f1f1" stroke-width="1.5"/>
<line x1="1266.10" y1="0" x2="1266.10" y2="1150" stroke="#f1f1f1" stroke-width="1.5"/>
<line x1="1293.00" y1="0" x2="1293.00" y2="1150" stroke="#e6e6e6" stroke-width="1.8"/>
<line x1="1321.90" y1="0" x2="1321.90" y2="1150" stroke="#f1f1f1" stroke-width="1.5"/>
<line x1="1348.90" y1="0" x2="1348.90" y2="1150" stroke="#f1f1f1" stroke-width="1.5"/>
<line x1="1375.90" y1="0" x2="1375.90" y2="1150" stroke="#f1f1f1" stroke-width="1.5"/>
<line x1="1402.80" y1="0" x2="1402.80" y2="1150" stroke="#e6e6e6" stroke-width="1.8"/>
<line x1="1431.70" y1="0" x2="1431.70" y2="1150" stroke="#f1f1f1" stroke-width="1.5"/>
<line x1="1458.70" y1="0" x2="1458.70" y2="1150" stroke="#f1f1f1" stroke-width="1.5"/>
<line x1="1485.70" y1="0" x2="1485.70" y2="1150" stroke="#f1f1f1" stroke-width="1.5"/>
<line x1="1512.60" y1="0" x2="1512.60" y2="1150" stroke="#e6e6e6" stroke-width="1.8"/>
<line x1="1541.50" y1="0" x2="1541.50" y2="1150" stroke="#f1f1f1" stroke-width="1.5"/>
<line x1="1568.50" y1="0" x2="1568.50" y2="1150" stroke="#f1f1f1" stroke-width="1.5"/>
<line x1="1595.50" y1="0" x2="1595.50" y2="1150" stroke="#f1f1f1" stroke-width="1.5"/>
<line x1="1622.40" y1="0" x2="1622.40" y2="1150" stroke="#e6e6e6" stroke-width="1.8"/>
<line x1="1651.30" y1="0" x2="1651.30" y2="1150" stroke="#f1f1f1" stroke-width="1.5"/>
<line x1="1678.30" y1="0" x2="1678.30" y2="1150" stroke="#f1f1f1" stroke-width="1.5"/>
<line x1="1705.30" y1="0" x2="1705.30" y2="1150" stroke="#f1f1f1" stroke-width="1.5"/>
<line x1="1732.20" y1="0" x2="1732.20" y2="1150" stroke="#e6e6e6" stroke-width="1.8"/>
<line x1="1761.10" y1="0" x2="1761.10" y2="1150" stroke="#f1f1f1" stroke-width="1.5"/>
<line x1="1788.10" y1="0" x2="1788.10" y2="1150" stroke="#f1f1f1" stroke-width="1.5"/>
<line x1="1815.10" y1="0" x2="1815.10" y2="1150" stroke="#f1f1f1" stroke-width="1.5"/>
<line x1="1842.00" y1="0" x2="1842.00" y2="1150" stroke="#e6e6e6" stroke-width="1.8"/>
<line x1="1870.90" y1="0" x2="1870.90" y2="1150" stroke="#f1f1f1" stroke-width="1.5"/>
<line x1="1897.90" y1="0" x2="1897.90" y2="1150" stroke="#f1f1f1" stroke-width="1.5"/>
<line x1="1924.90" y1="0" x2="1924.90" y2="1150" stroke="#f1f1f1" stroke-width="1.5"/>
<line x1="1951.80" y1="0" x2="1951.80" y2="1150" stroke="#e6e6e6" stroke-width="1.8"/>
<line x1="1980.70" y1="0" x2="1980.70" y2="1150" stroke="#f1f1f1" stroke-width="1.5"/>
<line x1="2007.70" y1="0" x2="2007.70" y2="1150" stroke="#f1f1f1" stroke-width="1.5"/>
<line x1="2034.70" y1="0" x2="2034.70" y2="1150" stroke="#f1f1f1" stroke-width="1.5"/>
<line x1="2061.60" y1="0" x2="2061.60" y2="1150" stroke="#e6e6e6" stroke-width="1.8"/>
<line x1="2090.50" y1="0" x2="2090.50" y2="1150" stroke="#f1f1f1" stroke-width="1.5"/>
<line x1="2117.50" y1="0" x2="2117.50" y2="1150" stroke="#f1f1f1" stroke-width="1.5"/>
<line x1="2144.50" y1="0" x2="2144.50" y2="1150" stroke="#f1f1f1" stroke-width="1.5"/>
<line x1="0" y1="4.36" x2="2155" y2="4.36" stroke="#f1f1f1" stroke-width="1.5"/>
<line x1="0" y1="31.36" x2="2155" y2="31.36" stroke="#f1f1f1" stroke-width="1.5"/>
<line x1="0" y1="58.36" x2="2155" y2="58.36" stroke="#f1f1f1" stroke-width="1.5"/>
<line x1="0" y1="85.26" x2="2155" y2="85.26" stroke="#e6e6e6" stroke-width="1.8"/>
<line x1="0" y1="114.16" x2="2155" y2="114.16" stroke="#f1f1f1" stroke-width="1.5"/>
<line x1="0" y1="141.16" x2="2155" y2="141.16" stroke="#f1f1f1" stroke-width="1.5"/>
<line x1="0" y1="168.16" x2="2155" y2="168.16" stroke="#f1f1f1" stroke-width="1.5"/>
<line x1="0" y1="195.06" x2="2155" y2="195.06" stroke="#e6e6e6" stroke-width="1.8"/>
<line x1="0" y1="223.96" x2="2155" y2="223.96" stroke="#f1f1f1" stroke-width="1.5"/>
<line x1="0" y1="250.96" x2="2155" y2="250.96" stroke="#f1f1f1" stroke-width="1.5"/>
<line x1="0" y1="277.96" x2="2155" y2="277.96" stroke="#f1f1f1" stroke-width="1.5"/>
<line x1="0" y1="304.86" x2="2155" y2="304.86" stroke="#e6e6e6" stroke-width="1.8"/>
<line x1="0" y1="333.76" x2="2155" y2="333.76" stroke="#f1f1f1" stroke-width="1.5"/>
<line x1="0" y1="360.76" x2="2155" y2="360.76" stroke="#f1f1f1" stroke-width="1.5"/>
<line x1="0" y1="387.76" x2="2155" y2="387.76" stroke="#f1f1f1" stroke-width="1.5"/>
<line x1="0" y1="414.66" x2="2155" y2="414.66" stroke="#e6e6e6" stroke-width="1.8"/>
<line x1="0" y1="443.56" x2="2155" y2="443.56" stroke="#f1f1f1" stroke-width="1.5"/>
<line x1="0" y1="470.56" x2="2155" y2="470.56" stroke="#f1f1f1" stroke-width="1.5"/>
<line x1="0" y1="497.56" x2="2155" y2="497.56" stroke="#f1f1f1" stroke-width="1.5"/>
<line x1="0" y1="524.46" x2="2155" y2="524.46" stroke="#e6e6e6" stroke-width="1.8"/>
<line x1="0" y1="553.36" x2="2155" y2="553.36" stroke="#f1f1f1" stroke-width="1.5"/>
<line x1="0" y1="580.36" x2="2155" y2="580.36" stroke="#f1f1f1" stroke-width="1.5"/>
<line x1="0" y1="607.36" x2="2155" y2="607.36" stroke="#f1f1f1" stroke-width="1.5"/>
<line x1="0" y1="634.26" x2="2155" y2="634.26" stroke="#e6e6e6" stroke-width="1.8"/>
<line x1="0" y1="663.16" x2="2155" y2="663.16" stroke="#f1f1f1" stroke-width="1.5"/>
<line x1="0" y1="690.16" x2="2155" y2="690.16" stroke="#f1f1f1" stroke-width="1.5"/>
<line x1="0" y1="717.16" x2="2155" y2="717.16" stroke="#f1f1f1" stroke-width="1.5"/>
<line x1="0" y1="744.06" x2="2155" y2="744.06" stroke="#e6e6e6" stroke-width="1.8"/>
<line x1="0" y1="772.96" x2="2155" y2="772.96" stroke="#f1f1f1" stroke-width="1.5"/>
<line x1="0" y1="799.96" x2="2155" y2="799.96" stroke="#f1f1f1" stroke-width="1.5"/>
<line x1="0" y1="826.96" x2="2155" y2="826.96" stroke="#f1f1f1" stroke-width="1.5"/>
<line x1="0" y1="853.86" x2="2155" y2="853.86" stroke="#e6e6e6" stroke-width="1.8"/>
<line x1="0" y1="882.76" x2="2155" y2="882.76" stroke="#f1f1f1" stroke-width="1.5"/>
<line x1="0" y1="909.76" x2="2155" y2="909.76" stroke="#f1f1f1" stroke-width="1.5"/>
<line x1="0" y1="936.76" x2="2155" y2="936.76" stroke="#f1f1f1" stroke-width="1.5"/>
<line x1="0" y1="963.66" x2="2155" y2="963.66" stroke="#e6e6e6" stroke-width="1.8"/>
<line x1="0" y1="992.56" x2="2155" y2="992.56" stroke="#f1f1f1" stroke-width="1.5"/>
<line x1="0" y1="1019.56" x2="2155" y2="1019.56" stroke="#f1f1f1" stroke-width="1.5"/>
<line x1="0" y1="1046.56" x2="2155" y2="1046.56" stroke="#f1f1f1" stroke-width="1.5"/>
<line x1="0" y1="1073.46" x2="2155" y2="1073.46" stroke="#e6e6e6" stroke-width="1.8"/>
<line x1="0" y1="1102.36" x2="2155" y2="1102.36" stroke="#f1f1f1" stroke-width="1.5"/>
<line x1="0" y1="1129.36" x2="2155" y2="1129.36" stroke="#f1f1f1" stroke-width="1.5"/>
<g transform="translate(-396,-167)">
<rect x="1098.1" y="389.40000000000003" width="1285.6000000000001" height="175.79999999999998" rx="3" fill="none" stroke="#8fd13f" stroke-width="4.6"/>
<rect x="402.3" y="1149.2" width="833.4" height="158.19999999999996" rx="3" fill="none" stroke="#8fd13f" stroke-width="4.6"/>
<polyline points="557,304 557,405" fill="none" stroke="#333333" stroke-width="2.6"/>
<polyline points="675.5,475.8 760,475.8" fill="none" stroke="#333333" stroke-width="2.6"/>
<polyline points="1018.3,475.8 1113,475.8" fill="none" stroke="#333333" stroke-width="2.6"/>
<polyline points="1350.6,475.8 1592,475.8" fill="none" stroke="#333333" stroke-width="2.6"/>
<polyline points="1816,475.8 2058,475.8" fill="none" stroke="#333333" stroke-width="2.6"/>
<polyline points="1420,475.8 1420,791" fill="none" stroke="#333333" stroke-width="2.6"/>
<polyline points="2000.4,475.8 2000.4,791.2" fill="none" stroke="#333333" stroke-width="2.6"/>
<polyline points="557,526 557,665.5 620,665.5" fill="none" stroke="#333333" stroke-width="2.6"/>
<polyline points="865.6,665.5 943,665.5" fill="none" stroke="#333333" stroke-width="2.6"/>
<polyline points="1164.3,665.5 1243,665.5 1243,547" fill="none" stroke="#333333" stroke-width="2.6"/>
<polyline points="1065,1233 1065,736" fill="none" stroke="#333333" stroke-width="2.6"/>
<polyline points="988,863.7 1065,863.7" fill="none" stroke="#333333" stroke-width="2.6"/>
<polyline points="988.3,1233 1065,1233" fill="none" stroke="#333333" stroke-width="2.6"/>
<polyline points="678.6,863.7 765,863.7" fill="none" stroke="#333333" stroke-width="2.6"/>
<polyline points="686.5,1047.9 765,1047.9" fill="none" stroke="#333333" stroke-width="2.6"/>
<polyline points="988,1047.9 1298.3,1047.9 1298.3,790.6 1469,790.6" fill="none" stroke="#333333" stroke-width="2.6"/>
<polyline points="713.4,1233 765,1233" fill="none" stroke="#333333" stroke-width="2.6"/>
<polyline points="1692,791.5 1739,791" fill="none" stroke="#333333" stroke-width="2.6"/>
<polyline points="1962,791.2 2046,791.2" fill="none" stroke="#333333" stroke-width="2.6"/>
<polyline points="2275.7,791.2 2312,791.2" fill="none" stroke="#333333" stroke-width="2.6"/>
<polygon points="557,426.5 549.5,404.5 564.5,404.5" fill="#333333"/>
<polygon points="781.7,475.8 759.7,468.3 759.7,483.3" fill="#333333"/>
<polygon points="1134.6,475.8 1112.6,468.3 1112.6,483.3" fill="#333333"/>
<polygon points="1613.5,475.8 1591.5,468.3 1591.5,483.3" fill="#333333"/>
<polygon points="2079.5,475.8 2057.5,468.3 2057.5,483.3" fill="#333333"/>
<polygon points="641.8,665.5 619.8,658.0 619.8,673.0" fill="#333333"/>
<polygon points="964.6,665.5 942.6,658.0 942.6,673.0" fill="#333333"/>
<polygon points="1243,525.7 1235.5,547.7 1250.5,547.7" fill="#333333"/>
<polygon points="1065,714.2 1057.5,736.2 1072.5,736.2" fill="#333333"/>
<polygon points="787,863.7 765,856.2 765,871.2" fill="#333333"/>
<polygon points="787,1047.9 765,1040.4 765,1055.4" fill="#333333"/>
<polygon points="787,1233 765,1225.5 765,1240.5" fill="#333333"/>
<polygon points="1490.3,790.8 1468.3,783.3 1468.3,798.3" fill="#333333"/>
<polygon points="1760.3,791 1738.3,783.5 1738.3,798.5" fill="#333333"/>
<polygon points="2067.5,791.2 2045.5,783.7 2045.5,798.7" fill="#333333"/>
<polygon points="2333.8,791.2 2311.8,783.7 2311.8,798.7" fill="#333333"/>
<rect x="442.5" y="205.5" width="229" height="97" rx="7" fill="#ffffff" stroke="#1f2730" stroke-width="3"/>
<text x="557.0" y="250.5" class="dt">任意对象执行</text>
<text x="557.0" y="278" class="dt">readObject方法</text>
<rect x="440.0" y="428.0" width="234.0" height="96.5" rx="7" fill="#ffffff" stroke="#1f2730" stroke-width="3"/>
<text x="557.0" y="455" class="dt">AnnotationInvoc</text>
<text x="557.0" y="484" class="dt">ationHandler.rea</text>
<text x="557.0" y="513.5" class="dt">dObject</text>
<rect x="783.2" y="428.2" width="233.5999999999999" height="96.30000000000001" rx="7" fill="#ffffff" stroke="#1f2730" stroke-width="3"/>
<text x="900.0" y="455" class="dt">Map.Entry</text>
<text x="900.0" y="485" class="dt">TransformedMap.</text>
<text x="900.0" y="513.5" class="dt">checkSetValue</text>
<rect x="1136.1" y="428.2" width="213.0" height="96.00000000000006" rx="7" fill="#ffffff" stroke="#1f2730" stroke-width="3"/>
<text x="1242.6" y="469.7" class="dt">ChainedTransfo</text>
<text x="1242.6" y="499.5" class="dt">rmer.transform</text>
<rect x="1615.0" y="428.2" width="199.5" height="96.00000000000006" rx="7" fill="#ffffff" stroke="#1f2730" stroke-width="3"/>
<text x="1714.75" y="469.7" class="dt">InvokerTransf</text>
<text x="1714.75" y="499.5" class="dt">orm.transform</text>
<rect x="2081.0" y="428.5" width="171.25" height="95.5" rx="7" fill="#ffffff" stroke="#1f2730" stroke-width="3"/>
<text x="2166.625" y="470" class="dt">Runtime.ex</text>
<text x="2166.625" y="499" class="dt">ec()</text>
<rect x="643.3" y="617.3" width="220.80000000000007" height="95.40000000000009" rx="7" fill="#ffffff" stroke="#1f2730" stroke-width="3"/>
<text x="753.7" y="645.3" class="dt">Proxy(Annotatio</text>
<text x="753.7" y="674" class="dt">nInvocationHan</text>
<text x="753.7" y="703" class="dt">dler).xxx</text>
<rect x="966.1" y="617.3" width="196.69999999999993" height="95.40000000000009" rx="7" fill="#ffffff" stroke="#1f2730" stroke-width="3"/>
<text x="1064.45" y="674" class="dt">LazyMap.get</text>
<rect x="1491.8" y="744.0" width="198.70000000000005" height="95.5" rx="7" fill="#ffffff" stroke="#1f2730" stroke-width="3"/>
<text x="1591.15" y="771" class="dt">InstantiateTra</text>
<text x="1591.15" y="800.5" class="dt">nsformer.trans</text>
<text x="1591.15" y="829.7" class="dt">form</text>
<rect x="1761.8" y="744.0" width="198.70000000000005" height="95.5" rx="7" fill="#ffffff" stroke="#1f2730" stroke-width="3"/>
<text x="1861.15" y="785.3" class="dt">TrAXFilter.TrAX</text>
<text x="1861.15" y="814.8" class="dt">Filter</text>
<rect x="2069.0" y="744.5" width="205.19999999999982" height="94.79999999999995" rx="7" fill="#ffffff" stroke="#1f2730" stroke-width="3"/>
<text x="2171.6" y="770.4" class="dt">TemplatesImpl.</text>
<text x="2171.6" y="800" class="dt">newTransform</text>
<text x="2171.6" y="828.5" class="dt">er</text>
<rect x="2335.3" y="744.5" width="206.79999999999973" height="94.79999999999995" rx="7" fill="#ffffff" stroke="#1f2730" stroke-width="3"/>
<text x="2438.7" y="784" class="dt">defineClass</text>
<text x="2438.7" y="814.7" class="dt">->newInstance</text>
<rect x="479.1" y="816.2" width="198.0" height="95.19999999999993" rx="7" fill="#ffffff" stroke="#1f2730" stroke-width="3"/>
<text x="578.1" y="858.9" class="dt">HashMap.read</text>
<text x="578.1" y="887.5" class="dt">Object</text>
<rect x="788.5" y="816.2" width="198" height="95.19999999999993" rx="7" fill="#ffffff" stroke="#1f2730" stroke-width="3"/>
<text x="887.5" y="858.9" class="dt">TiedMapEntry.</text>
<text x="887.5" y="887.5" class="dt">hashCode</text>
<rect x="488.9" y="1000.2" width="196.10000000000002" height="94.79999999999995" rx="7" fill="#ffffff" stroke="#1f2730" stroke-width="3"/>
<text x="586.95" y="1042.5" class="dt">PriorityQueue.</text>
<text x="586.95" y="1071.2" class="dt">readObject</text>
<rect x="788.5" y="1000.2" width="198" height="94.79999999999995" rx="7" fill="#ffffff" stroke="#1f2730" stroke-width="3"/>
<text x="887.5" y="1027.6" class="dt">Transforming</text>
<text x="887.5" y="1058" class="dt">Comparator.c</text>
<text x="887.5" y="1086.7" class="dt">ompare</text>
<rect x="478.8" y="1184.7" width="233.09999999999997" height="95.39999999999986" rx="7" fill="#ffffff" stroke="#1f2730" stroke-width="3"/>
<text x="595.35" y="1212.5" class="dt">BadAttributeValu</text>
<text x="595.35" y="1242" class="dt">eExpException.re</text>
<text x="595.35" y="1270.5" class="dt">adObject</text>
<rect x="788.5" y="1184.7" width="198.29999999999995" height="95.39999999999986" rx="7" fill="#ffffff" stroke="#1f2730" stroke-width="3"/>
<text x="887.65" y="1227" class="dt">TiedMapEntry.</text>
<text x="887.65" y="1256" class="dt">toString</text>
<text x="731" y="455" class="dt">cc1</text>
<text x="707" y="758.3" class="dt">memberValues=LazyMap</text>
<text x="1451.5" y="644" class="dt">cc3</text>
<text x="2029.5" y="644" class="dt">cc2</text>
<text x="429" y="872" class="dt">cc6</text>
<text x="429" y="1057" class="dt">cc4</text>
<text x="428.5" y="1244.3" class="dt">cc5</text>
<text x="2264" y="882.8" class="dt">TemplatesImpl.newTransformer()</text>
<text x="2264" y="911.8" class="dt">-> getTransletInstance()</text>
<text x="2264" y="940.5" class="dt">->defineTransletClasses()</text>
<text x="2264" y="970.3" class="dt">-> defineClass()</text>
<text x="2264" y="999" class="dt">-> newInstance</text>
<text transform="translate(567.5,563) rotate(90)" class="dl">cc1补</text>
</g></svg>
</div>
<div class="abs" style="left:396px;top:1317px;width:2164px;height:10px;background:#e9eaec"></div>
<div class="abs" style="left:1146px;top:1318.5px;width:777px;height:7.5px;border-radius:4px;background:#c8c8c8"></div>
<div class="abs" style="left:2551px;top:167px;width:9px;height:1150px;background:#e9eaec"></div>
<div class="abs" style="left:2552px;top:602px;width:7.5px;height:285px;border-radius:4px;background:#c6c6c6"></div>
<div class="abs" style="left:0;top:1327px;width:2560px;height:34px;background:#fff"></div>
<svg class="abs" style="left:0;top:0" width="2560" height="1363"><path d="M27.5,1334 L37.8,1340 L27.5,1346 L17.2,1340 Z M18.5,1343.6 L27.5,1349.6 L36.5,1343.6 M18.5,1347.8 L27.5,1354 L36.5,1347.8" fill="none" stroke="#1f2329" stroke-width="1.4" stroke-linejoin="round"/>
<rect x="56.3" y="1329" width="78.5" height="30" rx="6" fill="#e6e7e9"/>
<line x1="150.5" y1="1336" x2="150.5" y2="1356" stroke="#dcdfe3" stroke-width="1"/>
<path d="M175.2,1335.5 V1352.5 M166.6,1344 H183.8" stroke="#1f2329" stroke-width="1.8"/>
<line x1="2013.6" y1="1336" x2="2013.6" y2="1355" stroke="#dcdfe3" stroke-width="1"/>
<rect x="2037.5" y="1335" width="19" height="18" rx="2" fill="none" stroke="#1f2329" stroke-width="1.7"/><path d="M2037.5,1341 H2056.5 M2043.5,1341 V1353" stroke="#1f2329" stroke-width="1.7"/>
<path d="M2079.5,1338 L2085.5,1335.5 L2093,1338 L2099,1335.5 V1350.5 L2093,1353 L2085.5,1350.5 L2079.5,1353 Z M2085.5,1335.5 V1350.5 M2093,1338 V1353" fill="none" stroke="#1f2329" stroke-width="1.6" stroke-linejoin="round"/>
<path d="M2124.5,1344.5 H2144" stroke="#1f2329" stroke-width="2"/>
<path d="M2160.6,1344.5 H2322.8" stroke="#1f2329" stroke-width="3"/>
<circle cx="2250.7" cy="1344.5" r="6.8" fill="#fff" stroke="#1f2329" stroke-width="1.6"/>
<path d="M2349.8,1335 V1354 M2340.8,1344.5 H2358.9" stroke="#1f2329" stroke-width="2"/>
<path d="M2457.5,1340 V1335 H2462.5 M2471.5,1335 H2476.5 V1340 M2476.5,1349 V1354 H2471.5 M2462.5,1354 H2457.5 V1349" fill="none" stroke="#1f2329" stroke-width="1.8"/>
<line x1="2494.8" y1="1336" x2="2494.8" y2="1355" stroke="#dcdfe3" stroke-width="1"/>
<circle cx="2528" cy="1343.5" r="11" fill="#1f2329"/>
<text x="2528" y="1350.5" text-anchor="middle" font-family="Liberation Sans" font-weight="bold" font-size="17" fill="#fff">?</text></svg>
<div class="abs t" style="left:71.5px;top:1332.5px;font-size:18.5px;color:#22262c">画布1</div>
<div class="abs t" style="left:1917px;top:1332px;font-size:19.5px;color:#1f2329">图形：47</div>
<div class="abs t" style="left:2381px;top:1332px;font-size:19.5px;color:#1f2329">120%</div>
</div></body></html>
